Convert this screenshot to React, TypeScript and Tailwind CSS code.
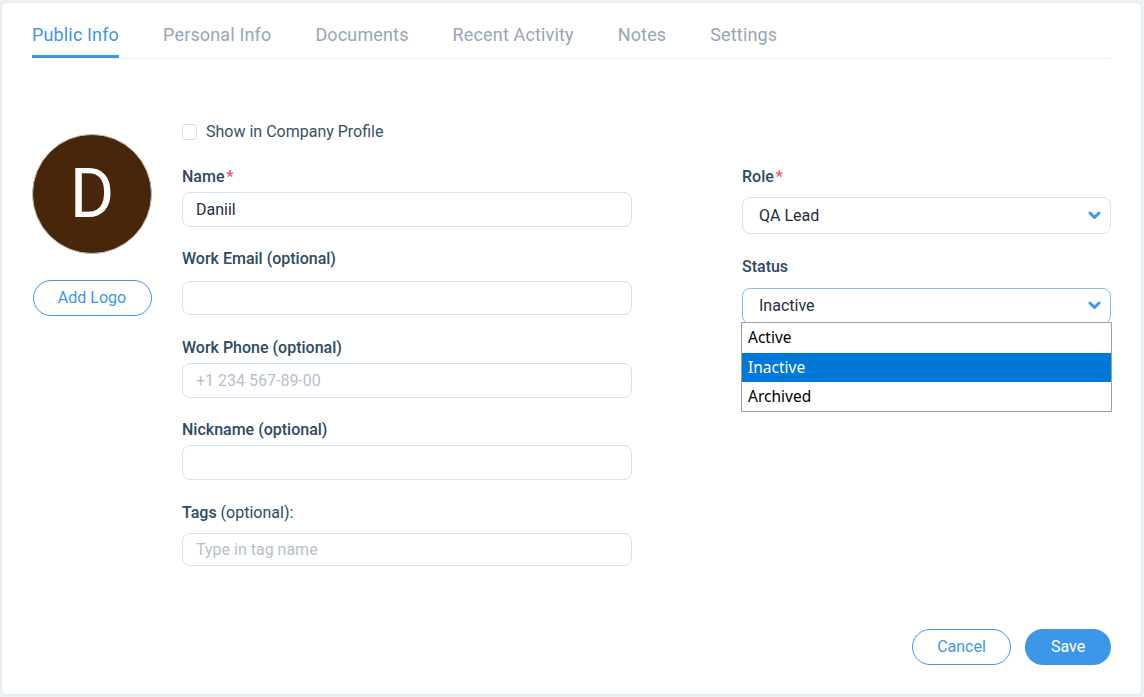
import { useState } from 'react';

const tabs = ['Public Info', 'Personal Info', 'Documents', 'Recent Activity', 'Notes', 'Settings'];

function Chevron() {
  return (
    <svg width="13" height="9" viewBox="0 0 13 9" fill="none" className="shrink-0">
      <polyline points="2,2 6.5,6.5 11,2" stroke="#3d97e8" strokeWidth="3" strokeLinecap="round" strokeLinejoin="round" />
    </svg>
  );
}

function Label({ children, required }: { children: React.ReactNode; required?: boolean }) {
  return (
    <div className="h-5 leading-5 text-[16px] font-medium text-[#2c4a63]">
      {children}
      {required && <span className="ml-[2px] text-[#f2506a]">*</span>}
    </div>
  );
}

export default function App() {
  const [showProfile, setShowProfile] = useState(false);
  const [status] = useState('Inactive');

  const inputCls =
    'w-full rounded-[8px] border border-[#cde3f7] bg-white px-[13px] text-[16px] text-[#1f2d3d] outline-none placeholder:text-[#b6c0cc]';

  return (
    <div className="h-[697px] w-full bg-[#eef1f6] pl-[2px] pr-[3px] py-[3px]" style={{ fontFamily: 'Roboto, "Liberation Sans", sans-serif' }}>
      <div className="flex h-full flex-col rounded-[4px] bg-white px-[30px] pt-[20px] pb-[29px] shadow-[0_0_2px_rgba(120,135,160,0.25)]">
        {/* Tabs */}
        <div className="flex gap-[44px] border-b border-[#eef0f4]">
          {tabs.map((t, i) => (
            <button
              key={t}
              className={`h-[35px] border-b-[3px] pb-[8px] text-[18px] leading-6 tracking-[0.15px] ${
                i === 0 ? 'border-[#3d97e8] text-[#3d97e8]' : 'border-transparent text-[#98a5b7]'
              }`}
            >
              {t}
            </button>
          ))}
        </div>

        {/* Body */}
        <div className="mt-[63px] flex gap-[30px]">
          <div className="flex w-[120px] flex-col items-center pt-[12px]">
            <div className="flex h-[120px] w-[120px] items-center justify-center rounded-full border border-[#c9bdb2] bg-[#472609] text-[68px] leading-none text-white">
              D
            </div>
            <button className="mt-[26px] h-[36px] w-[119px] rounded-full border border-[#3d97e8] text-[16px] text-[#3d97e8]">
              Add Logo
            </button>
          </div>

          <div className="flex flex-1 flex-col">
            <label className="flex h-5 items-center gap-[9px] text-[16px] text-[#3b4f66]">
              <input
                type="checkbox"
                checked={showProfile}
                onChange={() => setShowProfile(!showProfile)}
                className="h-[16px] w-[15px] appearance-none rounded-[3px] border border-[#cfe0f0] bg-white"
              />
              Show in Company Profile
            </label>

            <div className="mt-[25px] flex gap-[110px]">
              {/* Left column */}
              <div className="flex w-[450px] flex-col">
                <Label required>Name</Label>
                <input className={`${inputCls} mt-[5px] h-[35px]`} defaultValue="Daniil" />

                <div className="mt-[22px]">
                  <Label>Work Email (optional)</Label>
                </div>
                <input className={`${inputCls} mt-[12px] h-[34px]`} />

                <div className="mt-[23px]">
                  <Label>Work Phone (optional)</Label>
                </div>
                <input className={`${inputCls} mt-[5px] h-[35px]`} placeholder="+1 234 567-89-00" />

                <div className="mt-[22px]">
                  <Label>Nickname (optional)</Label>
                </div>
                <input className={`${inputCls} mt-[5px] h-[35px]`} />

                <div className="mt-[23px] h-5 leading-5 text-[16px] text-[#2c4a63]">
                  <span className="font-medium">Tags</span> (optional):
                </div>
                <input className={`${inputCls} mt-[10px] h-[33px] px-[12px]`} placeholder="Type in tag name" />
              </div>

              {/* Right column */}
              <div className="flex flex-1 flex-col">
                <Label required>Role</Label>
                <div className="mt-[10px] flex h-[37px] items-center justify-between rounded-[8px] border border-[#cde3f7] pl-[16px] pr-[9px] text-[16px] text-[#1f2d3d]">
                  QA Lead
                  <Chevron />
                </div>

                <div className="mt-[23px]">
                  <Label>Status</Label>
                </div>
                <div className="relative mt-[11px]">
                  <div className="flex h-[36px] items-center justify-between rounded-[8px] border border-[#86bdec] pb-[1px] pl-[16px] pr-[9px] text-[16px] text-[#1f2d3d]">
                    {status}
                    <Chevron />
                  </div>
                  <div
                    className="absolute left-[-1px] top-[34px] w-[371px] border border-[#a0a0a0] bg-white text-[15.5px] text-black"
                    style={{ fontFamily: '"Noto Sans", "Open Sans", sans-serif' }}
                  >
                    <div className="flex h-[30px] items-center pl-[6px]">Active</div>
                    <div className="flex h-[29px] items-center bg-[#0078d7] pl-[6px] text-white">Inactive</div>
                    <div className="flex h-[29px] items-center pl-[6px]">Archived</div>
                  </div>
                </div>
              </div>
            </div>
          </div>
        </div>

        {/* Footer */}
        <div className="mt-auto flex justify-end gap-[14px]">
          <button className="h-[36px] w-[99px] rounded-full border border-[#3d97e8] text-[16px] text-[#3d97e8]">Cancel</button>
          <button className="h-[36px] w-[86px] rounded-full bg-[#3d97e8] text-[16px] text-white">Save</button>
        </div>
      </div>
    </div>
  );
}
